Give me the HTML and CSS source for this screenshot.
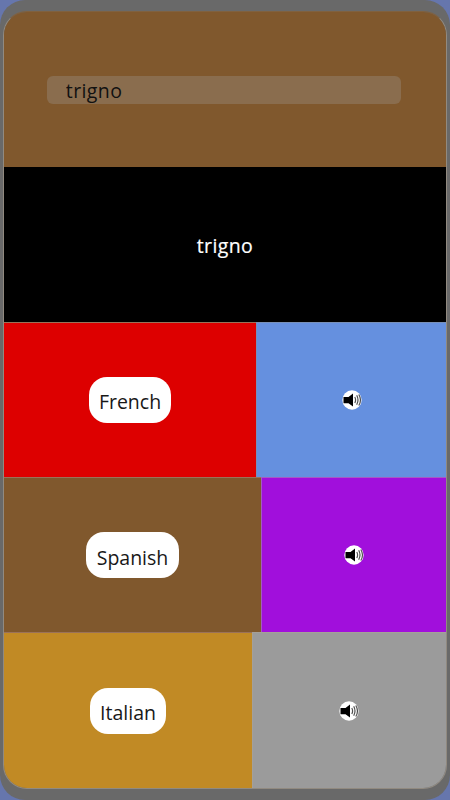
FILE: index.html
```html
<!DOCTYPE html>
<html lang="en">
<head>
<meta charset="utf-8">
<title>Translator</title>
<link rel="stylesheet" href="styles.css">
</head>
<body>
<svg width="0" height="0" class="defs">
  <symbol id="speaker" viewBox="0 0 20 20">
    <circle cx="10" cy="10" r="9.700" fill="#fff"/>
    <path d="M1.500 7h5L11 3.500v13L6.500 13.200h-5z" fill="#000"/>
    <path class="waves" d="M12.800 7q1.600 3 0 6M14.700 5.300q2.600 4.700 0 9.400M16.800 4.500q3.400 5.500 0 11" fill="none" stroke-width="1.200"/>
  </symbol>
</svg>
<div class="phone">
  <main class="screen">
    <section class="search"><input class="field" type="text" value="trigno" aria-label="Word"></section>
    <section class="word">trigno</section>
    <section class="row french">
      <div class="cell"><button class="pill">French</button></div>
      <div class="cell audio"><svg class="icon"><use href="#speaker"/></svg></div>
    </section>
    <section class="row spanish">
      <div class="cell"><button class="pill">Spanish</button></div>
      <div class="cell audio"><svg class="icon"><use href="#speaker"/></svg></div>
    </section>
    <section class="row italian">
      <div class="cell"><button class="pill">Italian</button></div>
      <div class="cell audio"><svg class="icon"><use href="#speaker"/></svg></div>
    </section>
  </main>
</div>
</body>
</html>
```
FILE: styles.css
```css
* { box-sizing: border-box; }
body {
  margin: 0;
  height: 800px;
  overflow: hidden;
  background: #6676ad;
  font-family: "Open Sans", "Noto Sans", sans-serif;
  font-size: 19.5px;
}
.defs { display: block; }
.phone {
  height: 800px;
  padding: 11px 3px 11px;
  background: #696969;
  border-radius: 25px;
}
.screen {
  display: grid;
  grid-template-rows: 155px 155px 155px 155px 1fr;
  height: 778px;
  border: 1px solid #918a80;
  border-top-color: #80613f;
  border-radius: 24px;
  overflow: hidden;
}
.search {
  display: flex;
  align-items: center;
  justify-content: center;
  padding: 0 1.400px 0 0;
  background: #80582d;
}
.field {
  width: 354px;
  height: 28px;
  padding: 1px 18px 0 18.500px;
  border: 0;
  border-radius: 6px;
  outline: 0;
  background: #8a6d4e;
  color: #111;
  font: inherit;
  letter-spacing: 0.4px;
}
.word {
  display: flex;
  align-items: center;
  justify-content: center;
  padding-top: 2px;
  background: #000;
  color: #fff;
  letter-spacing: 0.4px;
  -webkit-text-stroke: 0.2px #fff;
}
.row { display: grid; }
.french { grid-template-columns: 252px 1fr; }
.spanish { grid-template-columns: 257px 1fr; }
.italian { grid-template-columns: 248px 1fr; }
.cell {
  display: flex;
  align-items: center;
  justify-content: center;
  border-top: 1px solid #9b7259;
}
.audio { border-left: 1px solid #9a8aa0; }
.french .cell { background: #dd0000; }
.french .audio { background: #6590df; border-color: #7890b8; }
.spanish .cell { background: #80582d; }
.spanish .audio { background: #a10fdc; border-color: #a45bc4; }
.italian .cell { background: #c18a25; }
.italian .audio { padding-right: 2px; background: #9b9b9b; border-color: #a5a098; }
.pill {
  height: 46px;
  padding: 4px 0 0;
  border: 0;
  border-radius: 18px;
  background: #fff;
  color: #181818;
  font: inherit;
}
.french .pill { width: 82px; padding-top: 3px; }
.spanish .pill { width: 93px; }
.italian .pill { width: 76px; padding-top: 3px; }
.icon { width: 20px; height: 20px; }
.waves { stroke: #505050; }
```
